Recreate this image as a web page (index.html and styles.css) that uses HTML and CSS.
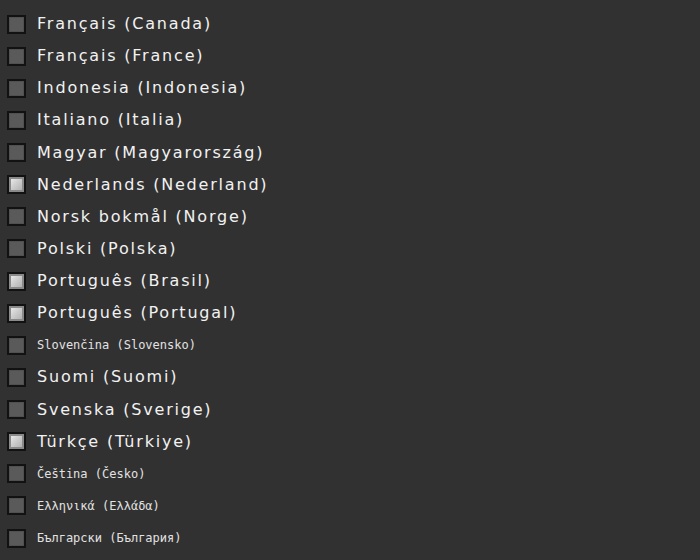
FILE: index.html
```html
<!DOCTYPE html>
<html lang="en">
<head>
<meta charset="utf-8">
<title>Language</title>
<link rel="stylesheet" href="styles.css">
</head>
<body>
<ul class="list">
  <li class="row"><span class="box"></span><span class="label">Français (Canada)</span></li>
  <li class="row"><span class="box"></span><span class="label">Français (France)</span></li>
  <li class="row"><span class="box"></span><span class="label">Indonesia (Indonesia)</span></li>
  <li class="row"><span class="box"></span><span class="label">Italiano (Italia)</span></li>
  <li class="row"><span class="box"></span><span class="label">Magyar (Magyarország)</span></li>
  <li class="row"><span class="box on"></span><span class="label">Nederlands (Nederland)</span></li>
  <li class="row"><span class="box"></span><span class="label">Norsk bokmål (Norge)</span></li>
  <li class="row"><span class="box"></span><span class="label">Polski (Polska)</span></li>
  <li class="row"><span class="box on"></span><span class="label">Português (Brasil)</span></li>
  <li class="row"><span class="box on"></span><span class="label">Português (Portugal)</span></li>
  <li class="row"><span class="box"></span><span class="label small">Slovenčina (Slovensko)</span></li>
  <li class="row"><span class="box"></span><span class="label">Suomi (Suomi)</span></li>
  <li class="row"><span class="box"></span><span class="label">Svenska (Sverige)</span></li>
  <li class="row"><span class="box on"></span><span class="label">Türkçe (Türkiye)</span></li>
  <li class="row"><span class="box"></span><span class="label small">Čeština (Česko)</span></li>
  <li class="row"><span class="box"></span><span class="label small">Ελληνικά (Ελλάδα)</span></li>
  <li class="row"><span class="box"></span><span class="label small">Български (България)</span></li>
  <li class="row"><span class="box"></span></li>
</ul>
</body>
</html>
```
FILE: styles.css
```css
html, body {
  margin: 0;
  padding: 0;
  background: #313131;
  height: 100%;
  overflow: hidden;
}
.list {
  list-style: none;
  margin: 0;
  padding: 8px 0 0 7px;
  display: flex;
  flex-direction: column;
}
.row {
  height: 32.125px;
  display: flex;
  align-items: center;
  gap: 11px;
}
.box {
  flex: none;
  width: 19px;
  height: 19px;
  box-sizing: border-box;
  border: 2px solid #121212;
  background: #5a5a5a;
  box-shadow: inset 0 0 0 1px #505050;
}
.box.on {
  background: linear-gradient(135deg, #f4f4f4 0%, #cfcfcf 45%, #a9a9a9 100%);
  box-shadow: inset 0 0 0 2px #8a8a8a;
}
.label {
  font-family: "DejaVu Sans", sans-serif;
  font-size: 16px;
  letter-spacing: 1.8px;
  color: #f2f2f2;
  white-space: nowrap;
  line-height: 1;
}
.label.small {
  font-family: "DejaVu Sans Mono", monospace;
  font-size: 12px;
  letter-spacing: 0;
  color: #e2e2e2;
}
```
